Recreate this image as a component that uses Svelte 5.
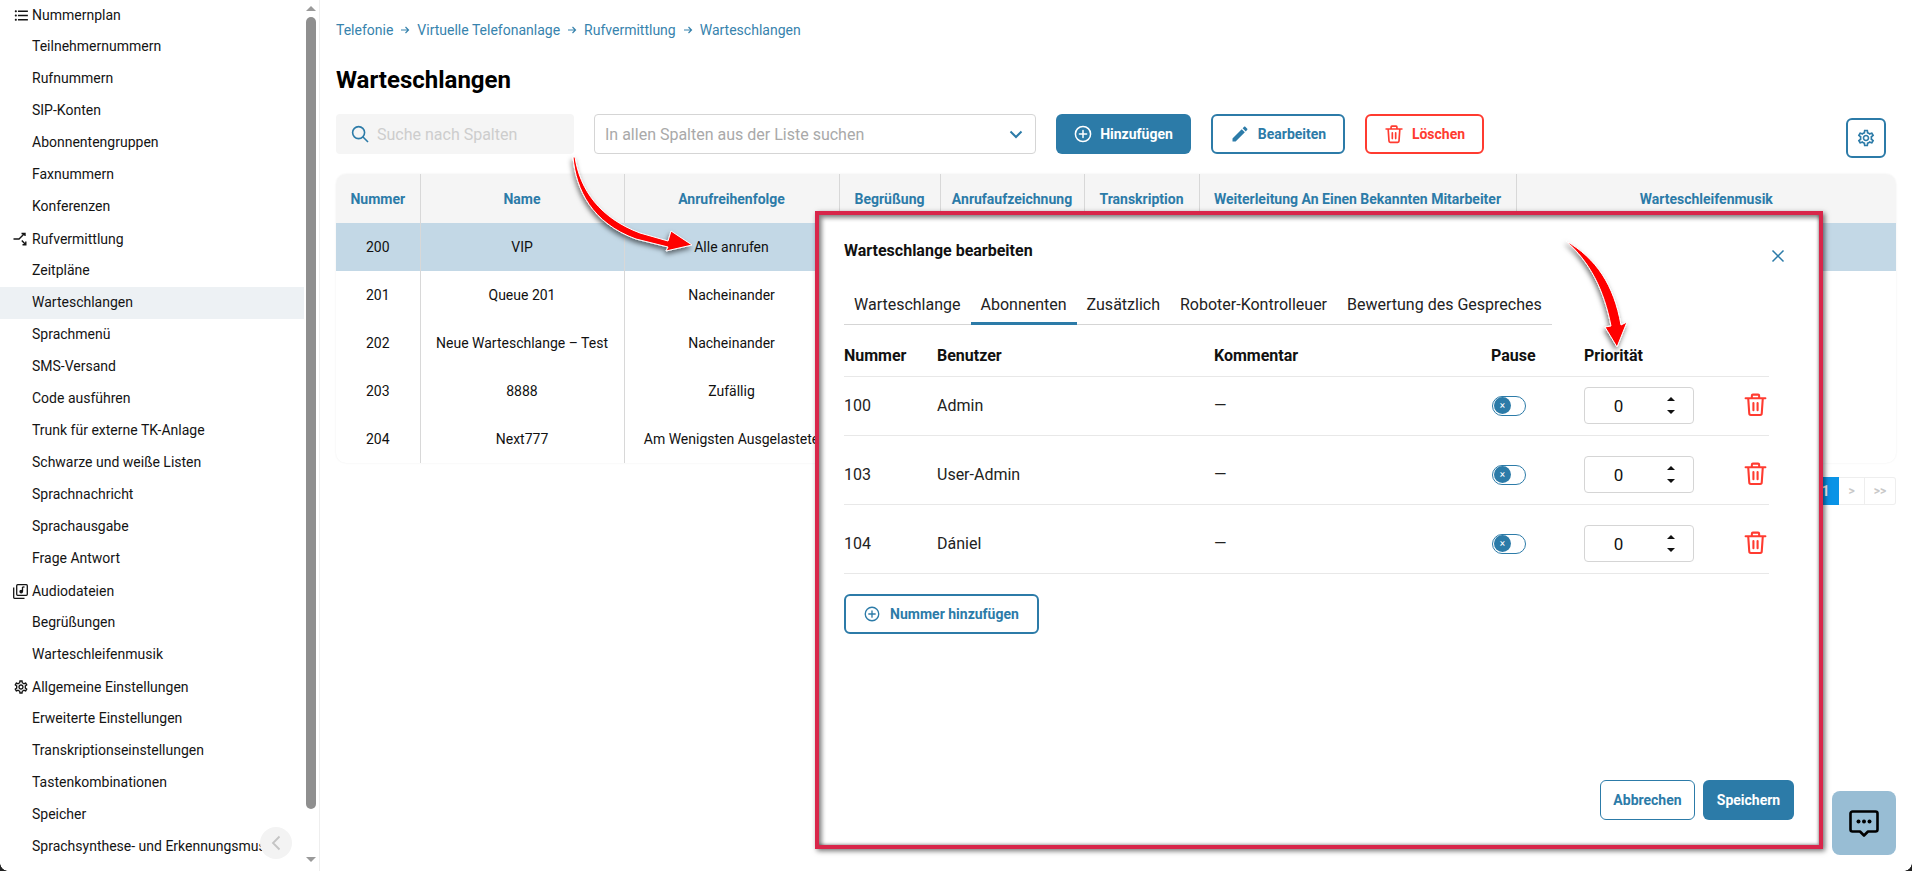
<script>
	const gearPath =
		'M19.43 12.98c.04-.32.07-.64.07-.98 0-.34-.03-.66-.07-.98l2.11-1.65c.19-.15.24-.42.12-.64l-2-3.46c-.09-.16-.26-.25-.44-.25-.06 0-.12.01-.17.03l-2.49 1c-.52-.4-1.08-.73-1.69-.98l-.38-2.65C14.46 2.18 14.25 2 14 2h-4c-.25 0-.46.18-.49.42l-.38 2.65c-.61.25-1.17.59-1.69.98l-2.49-1c-.06-.02-.12-.03-.18-.03-.17 0-.34.09-.43.25l-2 3.46c-.13.22-.07.49.12.64l2.11 1.65c-.04.32-.07.65-.07.98 0 .33.03.66.07.98l-2.11 1.65c-.19.15-.24.42-.12.64l2 3.46c.09.16.26.25.44.25.06 0 .12-.01.17-.03l2.49-1c.52.4 1.08.73 1.69.98l.38 2.65c.03.24.24.42.49.42h4c.25 0 .46-.18.49-.42l.38-2.65c.61-.25 1.17-.59 1.69-.98l2.49 1c.06.02.12.03.18.03.17 0 .34-.09.43-.25l2-3.46c.12-.22.07-.49-.12-.64l-2.11-1.65zm-1.98-1.71c.04.31.05.52.05.73 0 .21-.02.43-.05.73l-.14 1.13.89.7 1.08.84-.7 1.21-1.27-.51-1.04-.42-.9.68c-.43.32-.84.56-1.25.73l-1.06.43-.16 1.13-.2 1.35h-1.4l-.19-1.35-.16-1.13-1.06-.43c-.43-.18-.83-.41-1.23-.71l-.91-.7-1.06.43-1.27.51-.7-1.21 1.08-.84.89-.7-.14-1.13c-.03-.31-.05-.54-.05-.74s.02-.43.05-.73l.14-1.13-.89-.7-1.08-.84.7-1.21 1.27.51 1.04.42.9-.68c.43-.32.84-.56 1.25-.73l1.06-.43.16-1.13.2-1.35h1.39l.19 1.35.16 1.13 1.06.43c.43.18.83.41 1.23.71l.91.7 1.06-.43 1.27-.51.7 1.21-1.07.85-.89.7.14 1.13zM12 8c-2.21 0-4 1.79-4 4s1.79 4 4 4 4-1.79 4-4-1.79-4-4-4zm0 6c-1.1 0-2-.9-2-2s.9-2 2-2 2 .9 2 2-.9 2-2 2z';

	const menu = [
		{ icon: 'list', label: 'Nummernplan', items: ['Teilnehmernummern', 'Rufnummern', 'SIP-Konten', 'Abonnentengruppen', 'Faxnummern', 'Konferenzen'] },
		{ icon: 'split', label: 'Rufvermittlung', items: ['Zeitpläne', 'Warteschlangen', 'Sprachmenü', 'SMS-Versand', 'Code ausführen', 'Trunk für externe TK-Anlage', 'Schwarze und weiße Listen', 'Sprachnachricht', 'Sprachausgabe', 'Frage Antwort'] },
		{ icon: 'music', label: 'Audiodateien', items: ['Begrüßungen', 'Warteschleifenmusik'] },
		{ icon: 'gear', label: 'Allgemeine Einstellungen', items: ['Erweiterte Einstellungen', 'Transkriptionseinstellungen', 'Tastenkombinationen', 'Speicher', 'Sprachsynthese- und Erkennungsmusik'] }
	];

	const crumbs = ['Telefonie', 'Virtuelle Telefonanlage', 'Rufvermittlung', 'Warteschlangen'];

	const columns = [
		{ label: 'Nummer', width: 84 },
		{ label: 'Name', width: 204 },
		{ label: 'Anrufreihenfolge', width: 215 },
		{ label: 'Begrüßung', width: 101 },
		{ label: 'Anrufaufzeichnung', width: 144 },
		{ label: 'Transkription', width: 115 },
		{ label: 'Weiterleitung An Einen Bekannten Mitarbeiter', width: 317 },
		{ label: 'Warteschleifenmusik', width: 380 }
	];

	const queues = [
		{ num: '200', name: 'VIP', order: 'Alle anrufen' },
		{ num: '201', name: 'Queue 201', order: 'Nacheinander' },
		{ num: '202', name: 'Neue Warteschlange – Test', order: 'Nacheinander' },
		{ num: '203', name: '8888', order: 'Zufällig' },
		{ num: '204', name: 'Next777', order: 'Am Wenigsten Ausgelastete' }
	];

	const tabs = ['Warteschlange', 'Abonnenten', 'Zusätzlich', 'Roboter-Kontrolleuer', 'Bewertung des Gespreches'];

	const members = [
		{ num: '100', user: 'Admin' },
		{ num: '103', user: 'User-Admin' },
		{ num: '104', user: 'Dániel' }
	];
</script>

{#snippet trash(size)}
	<svg width={size} height={size} viewBox="0 0 24 24" fill="none" stroke="currentColor" stroke-width="2" stroke-linecap="round" stroke-linejoin="round">
		<path d="M2.5 6h19M8.5 6V3.5a1 1 0 0 1 1-1h5a1 1 0 0 1 1 1V6M5 6l1 14.5a1.5 1.5 0 0 0 1.5 1.5h9a1.5 1.5 0 0 0 1.5-1.5L19 6M10 10.5v7M14 10.5v7" />
	</svg>
{/snippet}

{#snippet plus(size)}
	<svg width={size} height={size} viewBox="0 0 18 18" fill="none" stroke="currentColor" stroke-width="1.5" stroke-linecap="round">
		<circle cx="9" cy="9" r="7.6" />
		<path d="M9 5.4v7.2M5.4 9h7.2" />
	</svg>
{/snippet}

<div class="page">
	<aside class="sidebar">
		<nav class="menu">
			{#each menu as group}
				<div class="group-head">
					<span class="group-icon">
						{#if group.icon === 'list'}
							<svg width="17" height="17" viewBox="0 0 24 24" fill="currentColor"><path d="M4 10.5c-.83 0-1.5.67-1.5 1.5s.67 1.5 1.5 1.5 1.5-.67 1.5-1.5-.67-1.5-1.5-1.5zm0-6c-.83 0-1.5.67-1.5 1.5S3.17 7.5 4 7.5 5.5 6.83 5.5 6 4.83 4.5 4 4.5zm0 12c-.83 0-1.5.68-1.5 1.5s.68 1.5 1.5 1.5 1.5-.68 1.5-1.5-.67-1.5-1.5-1.5zM7 19h14v-2H7v2zm0-6h14v-2H7v2zm0-8v2h14V5H7z" /></svg>
						{:else if group.icon === 'split'}
							<svg width="16" height="16" viewBox="0 0 16 16" fill="none" stroke="currentColor" stroke-width="1.4"><path d="M0.5 8H6L11.5 2.5M8.5 2.5h3.5V5M8.8 9.5L12.5 13.5M9.5 13.8h3.3v-3.3" /></svg>
						{:else if group.icon === 'music'}
							<svg width="15" height="15" viewBox="0 0 15 15" fill="none" stroke="currentColor" stroke-width="1.3"><rect x="3.7" y="0.7" width="10.6" height="10.6" rx="1" /><path d="M0.7 3.5v10a.8.8 0 0 0 .8.8h10" /><path d="M9.5 3v4.5" /><circle cx="8.2" cy="7.6" r="1.2" fill="currentColor" /><path d="M9.5 3h2" /></svg>
						{:else}
							<svg width="16" height="16" viewBox="0 0 24 24" fill="currentColor"><path d={gearPath} /></svg>
						{/if}
					</span>
					{group.label}
				</div>
				{#each group.items as item}
					<div class="item" class:active={item === 'Warteschlangen'}>{item}</div>
				{/each}
			{/each}
		</nav>
		<div class="scrollbar">
			<span class="sb-up"></span>
			<span class="sb-thumb"></span>
			<span class="sb-down"></span>
		</div>
		<button class="collapse" aria-label="Einklappen">
			<svg width="12" height="16" viewBox="0 0 12 16" fill="none" stroke="#c4c4c4" stroke-width="1.8"><path d="M9.5 1.5L3 8l6.5 6.5" /></svg>
		</button>
	</aside>

	<main class="main">
		<div class="crumbs">
			{#each crumbs as crumb, i}
				{#if i > 0}
					<span class="crumb-sep">
						<svg width="10" height="10" viewBox="0 0 10 10" fill="none" stroke="currentColor" stroke-width="1.2"><path d="M1 5h7.5M5.5 2l3 3-3 3" /></svg>
					</span>
				{/if}
				<span>{crumb}</span>
			{/each}
		</div>

		<h1 class="title">Warteschlangen</h1>

		<div class="toolbar">
			<div class="search">
				<svg width="18" height="18" viewBox="0 0 18 18" fill="none" stroke="#2c7ba8" stroke-width="1.6"><circle cx="7.6" cy="7.6" r="6" /><path d="M12 12l5 5" /></svg>
				<span>Suche nach Spalten</span>
			</div>
			<div class="select">
				<span>In allen Spalten aus der Liste suchen</span>
				<svg width="14" height="9" viewBox="0 0 14 9" fill="none" stroke="#2c7ba8" stroke-width="2"><path d="M1.5 1.5L7 7l5.5-5.5" /></svg>
			</div>
			<button class="btn btn-fill btn-add">{@render plus(18)} Hinzufügen</button>
			<button class="btn btn-line btn-edit">
				<svg width="20" height="20" viewBox="0 0 24 24" fill="currentColor"><path d="M3 17.25V21h3.75L17.81 9.94l-3.75-3.75L3 17.25zM20.71 7.04c.39-.39.39-1.02 0-1.41l-2.34-2.34c-.39-.39-1.02-.39-1.41 0l-1.83 1.83 3.75 3.75 1.83-1.83z" /></svg>
				Bearbeiten
			</button>
			<button class="btn btn-line btn-del">{@render trash(20)} Löschen</button>
			<button class="gear-btn" aria-label="Einstellungen">
				<svg width="20" height="20" viewBox="0 0 24 24" fill="currentColor"><path d={gearPath} /></svg>
			</button>
		</div>

		<div class="table-wrap">
			<table class="queues">
				<colgroup>
					{#each columns as col}
						<col style="width: {col.width}px" />
					{/each}
				</colgroup>
				<thead>
					<tr>
						{#each columns as col}
							<th>{col.label}</th>
						{/each}
					</tr>
				</thead>
				<tbody>
					{#each queues as q, i}
						<tr class:selected={i === 0}>
							<td>{q.num}</td>
							<td>{q.name}</td>
							<td>{q.order}</td>
							<td></td>
							<td></td>
							<td></td>
							<td></td>
							<td></td>
						</tr>
					{/each}
				</tbody>
			</table>
		</div>

		<div class="pager">
			<span>&lt;&lt;</span>
			<span>&lt;</span>
			<span class="current">1</span>
			<span>&gt;</span>
			<span>&gt;&gt;</span>
		</div>
	</main>

	<!-- annotation arrows drawn over the screenshot -->
	<svg class="arrows" width="1912" height="871" viewBox="0 0 1912 871">
		<defs>
			<filter id="arrow-shadow" x="-20%" y="-20%" width="150%" height="150%">
				<feDropShadow dx="-1" dy="3" stdDeviation="2.5" flood-color="#000" flood-opacity="0.55" />
			</filter>
		</defs>
		<g fill="#f00" stroke="#fff" stroke-width="1" filter="url(#arrow-shadow)">
			<path d="M575 157C580 190 600 218 640 233L668 241L671 231L692 245L666 251L668 247L636 239C592 223 576 190 573 157Z" />
			<path d="M1566 241C1596 258 1614 285 1621 325L1627 322L1617 347L1605 327L1611 326C1604 290 1590 262 1566 241Z" />
		</g>
	</svg>

	<section class="modal">
		<div class="modal-head">
			<h2>Warteschlange bearbeiten</h2>
			<button class="close" aria-label="Schließen">
				<svg width="14" height="14" viewBox="0 0 14 14" fill="none" stroke="#2c7ba8" stroke-width="1.5"><path d="M1.5 1.5l11 11M12.5 1.5l-11 11" /></svg>
			</button>
		</div>

		<div class="tabs">
			{#each tabs as tab, i}
				<span class="tab" class:on={i === 1}>{tab}</span>
			{/each}
		</div>

		<div class="members">
			<div class="m-row m-head">
				<span>Nummer</span>
				<span>Benutzer</span>
				<span>Kommentar</span>
				<span>Pause</span>
				<span>Priorität</span>
				<span></span>
			</div>
			{#each members as m}
				<div class="m-row">
					<span>{m.num}</span>
					<span>{m.user}</span>
					<span>—</span>
					<span class="toggle"><span class="knob">×</span></span>
					<div class="spin">
						<span class="spin-value">0</span>
						<span class="carets"><i class="up"></i><i class="down"></i></span>
					</div>
					<span class="del">{@render trash(25)}</span>
				</div>
			{/each}
		</div>

		<button class="btn btn-line btn-number">{@render plus(16)} Nummer hinzufügen</button>

		<div class="modal-foot">
			<button class="btn-foot cancel">Abbrechen</button>
			<button class="btn-foot save">Speichern</button>
		</div>
	</section>

	<button class="chat" aria-label="Chat">
		<svg width="30" height="27" viewBox="0 0 30 27" fill="none"><path d="M3.5 1.5h23a2 2 0 0 1 2 2v16a2 2 0 0 1-2 2h-7.5L15 25.5 11 21.5H3.5a2 2 0 0 1-2-2v-16a2 2 0 0 1 2-2z" stroke="#000" stroke-width="2.6" stroke-linejoin="round" /><circle cx="9.5" cy="11.5" r="2" fill="#000" /><circle cx="15" cy="11.5" r="2" fill="#000" /><circle cx="20.5" cy="11.5" r="2" fill="#000" /></svg>
	</button>

	<span class="corner corner-l"></span>
	<span class="corner corner-r"></span>
</div>

<style>
	:global(body) {
		margin: 0;
		background: #fff;
		overflow: hidden;
	}

	.page {
		position: relative;
		display: flex;
		width: 1912px;
		height: 871px;
		overflow: hidden;
		font-family: Roboto, "Liberation Sans", sans-serif;
		font-size: 14px;
		color: #111;
	}

	button {
		font-family: inherit;
		cursor: pointer;
	}

	/* sidebar */
	.sidebar {
		position: relative;
		flex: none;
		display: flex;
		width: 320px;
		height: 871px;
		box-sizing: border-box;
		border-right: 1px solid #eee;
	}

	.menu {
		width: 304px;
		margin-top: -1px;
		overflow: hidden;
		white-space: nowrap;
		color: #141414;
	}

	.group-head {
		display: flex;
		align-items: center;
		height: 32px;
		box-sizing: border-box;
		padding-left: 13px;
	}

	.group-icon {
		display: flex;
		justify-content: flex-start;
		width: 19px;
	}

	.item {
		height: 32px;
		line-height: 30px;
		padding-left: 32px;
	}

	.item.active {
		background: #edf1f4;
	}

	.scrollbar {
		display: flex;
		flex-direction: column;
		align-items: center;
		width: 10px;
		margin-left: 2px;
		padding-top: 6px;
		box-sizing: border-box;
		height: 871px;
	}

	.sb-up,
	.sb-down {
		width: 0;
		height: 0;
		border-left: 5px solid transparent;
		border-right: 5px solid transparent;
	}

	.sb-up {
		border-bottom: 5px solid #9a9a9a;
	}

	.sb-down {
		margin-top: 48px;
		border-top: 5px solid #9a9a9a;
	}

	.sb-thumb {
		width: 10px;
		height: 792px;
		margin-top: 6px;
		border-radius: 5px;
		background: #8f8f8f;
	}

	.collapse {
		position: absolute;
		left: 260px;
		top: 827px;
		display: flex;
		align-items: center;
		justify-content: center;
		width: 32px;
		height: 32px;
		padding: 0;
		border: none;
		border-radius: 50%;
		background: #f3f3f3;
	}

	/* main */
	.main {
		flex: 1;
		min-width: 0;
		padding: 21px 16px 0;
	}

	.crumbs {
		display: flex;
		align-items: center;
		height: 18px;
		color: #3783ad;
		font-size: 14px;
	}

	.crumb-sep {
		display: flex;
		justify-content: center;
		width: 24px;
	}

	.title {
		margin: 26px 0 0;
		height: 30px;
		font-size: 24px;
		line-height: 30px;
		font-weight: 700;
		color: #000;
	}

	.toolbar {
		display: flex;
		align-items: flex-start;
		gap: 20px;
		margin-top: 19px;
	}

	.search {
		display: flex;
		align-items: center;
		gap: 8px;
		width: 238px;
		height: 40px;
		box-sizing: border-box;
		padding-left: 15px;
		border-radius: 4px;
		background: #f5f5f5;
		color: #cdcdcd;
		font-size: 16px;
	}

	.select {
		display: flex;
		align-items: center;
		justify-content: space-between;
		width: 442px;
		height: 40px;
		box-sizing: border-box;
		padding: 0 12px 0 10px;
		border: 1px solid #d5d5d5;
		border-radius: 4px;
		color: #a9a9a9;
		font-size: 16px;
	}

	.btn {
		display: flex;
		align-items: center;
		justify-content: center;
		gap: 8px;
		height: 40px;
		box-sizing: border-box;
		border-radius: 6px;
		font-size: 14px;
		font-weight: 700;
		padding: 0;
	}

	.btn-fill {
		border: none;
		background: #2c7ba8;
		color: #fff;
	}

	.btn-line {
		border: 2px solid #2c7ba8;
		background: #fff;
		color: #2c7ba8;
	}

	.btn-add {
		width: 135px;
	}

	.btn-edit {
		width: 134px;
	}

	.btn-del {
		width: 119px;
		border-color: #ff3b30;
		color: #ff3b30;
	}

	.gear-btn {
		display: flex;
		align-items: center;
		justify-content: center;
		width: 40px;
		height: 40px;
		margin: 4px 10px 0 auto;
		padding: 0;
		border: 2px solid #2c7ba8;
		border-radius: 6px;
		background: #fff;
		color: #2c7ba8;
	}

	.table-wrap {
		margin-top: 16px;
		border-radius: 10px;
		overflow: hidden;
		box-shadow: 0 0 2px rgba(0, 0, 0, 0.08);
	}

	.queues {
		width: 1560px;
		table-layout: fixed;
		border-collapse: collapse;
	}

	.queues th {
		height: 49px;
		padding: 0;
		background: #f5f5f5;
		border-left: 1px solid #d8d8d8;
		color: #2c7ba8;
		font-size: 14px;
		font-weight: 700;
		white-space: nowrap;
	}

	.queues td {
		height: 48px;
		padding: 0;
		border-left: 1px solid #d8d8d8;
		text-align: center;
		white-space: nowrap;
		color: #111;
	}

	.queues th:first-child,
	.queues td:first-child {
		border-left: none;
	}

	.queues .selected td {
		background: #c3d8e6;
	}

	.pager {
		display: flex;
		justify-content: flex-end;
		margin-top: 14px;
		height: 28px;
	}

	.pager span {
		display: flex;
		align-items: center;
		justify-content: center;
		min-width: 26px;
		padding: 0 2px;
		box-sizing: border-box;
		border: 1px solid #eee;
		border-left: none;
		color: #c8c8c8;
		font-size: 12px;
		font-weight: 700;
	}

	.pager span:last-child {
		width: 31px;
		border-radius: 0 3px 3px 0;
	}

	.pager .current {
		background: #0a93e6;
		color: #fff;
		font-size: 14px;
		border-color: #0a93e6;
	}

	/* annotation */
	.arrows {
		position: absolute;
		left: 0;
		top: 0;
		z-index: 3;
		pointer-events: none;
	}

	/* modal */
	.modal {
		position: absolute;
		left: 815px;
		top: 211px;
		z-index: 2;
		display: flex;
		flex-direction: column;
		width: 1008px;
		height: 638px;
		box-sizing: border-box;
		padding: 25px;
		background: #fff;
		border: 4px solid #d8264a;
		box-shadow: 2px 2px 5px rgba(0, 0, 0, 0.55), inset 3px 3px 4px rgba(0, 0, 0, 0.45), inset -1px -1px 3px rgba(0, 0, 0, 0.35);
	}

	.modal-head {
		display: flex;
		align-items: center;
		justify-content: space-between;
		height: 20px;
	}

	.modal-head h2 {
		margin: 0;
		font-size: 16px;
		font-weight: 700;
		color: #111;
	}

	.close {
		display: flex;
		padding: 0;
		margin: 12px 9px 0 0;
		border: none;
		background: none;
	}

	.tabs {
		display: flex;
		width: 708px;
		margin-top: 25px;
		border-bottom: 1px solid #d5d5d5;
	}

	.tab {
		height: 39px;
		box-sizing: border-box;
		padding: 10px 10px 0;
		margin-bottom: -1px;
		font-size: 16px;
		line-height: 20px;
		color: #222;
	}

	.tab.on {
		border-bottom: 3px solid #2c7ba8;
		height: 40px;
	}

	.members {
		width: 925px;
		font-size: 16px;
	}

	.m-row {
		display: grid;
		grid-template-columns: 93px 277px 277px 93px 159px 1fr;
		align-items: center;
		padding: 20px 0 11px;
		border-bottom: 1px solid #e8e8e8;
		color: #222;
	}

	.m-head {
		height: 52px;
		box-sizing: border-box;
		padding: 10px 0 0;
		font-weight: 700;
		color: #111;
	}

	.m-head + .m-row {
		padding-top: 10px;
	}

	.toggle {
		display: flex;
		align-items: center;
		width: 34px;
		height: 20px;
		margin-left: 1px;
		box-sizing: border-box;
		border: 1px solid #2c7ba8;
		border-radius: 10px;
	}

	.knob {
		display: flex;
		align-items: center;
		justify-content: center;
		width: 17px;
		height: 17px;
		margin-left: 1px;
		border-radius: 50%;
		background: #2c7ba8;
		color: #fff;
		font-size: 10px;
		line-height: 1;
	}

	.spin {
		display: flex;
		align-items: center;
		width: 110px;
		height: 37px;
		box-sizing: border-box;
		border: 1px solid #d5d5d5;
		border-radius: 4px;
		color: #111;
	}

	.spin-value {
		width: 67px;
		text-align: center;
		font-size: 17px;
	}

	.carets {
		display: flex;
		flex-direction: column;
		align-items: center;
		gap: 9px;
		width: 38px;
	}

	.carets i {
		width: 0;
		height: 0;
		border-left: 4px solid transparent;
		border-right: 4px solid transparent;
	}

	.carets .up {
		border-bottom: 4px solid #111;
	}

	.carets .down {
		border-top: 4px solid #111;
	}

	.del {
		display: flex;
		justify-content: flex-end;
		padding: 0 5px 2px 0;
		color: #ff3b30;
	}

	.btn-number {
		width: 195px;
		height: 40px;
		margin-top: 20px;
		gap: 10px;
	}

	.modal-foot {
		display: flex;
		justify-content: flex-end;
		gap: 8px;
		margin-top: auto;
	}

	.btn-foot {
		height: 40px;
		padding: 0;
		border-radius: 6px;
		font-size: 14px;
		font-weight: 700;
	}

	.cancel {
		width: 95px;
		border: 1px solid #2c7ba8;
		background: #fff;
		color: #2c7ba8;
	}

	.save {
		width: 91px;
		border: none;
		background: #2c7ba8;
		color: #fff;
	}

	.chat {
		position: absolute;
		left: 1832px;
		top: 791px;
		z-index: 4;
		display: flex;
		align-items: center;
		justify-content: center;
		width: 64px;
		height: 64px;
		padding: 0;
		border: none;
		border-radius: 8px;
		background: #98bdd4;
	}

	.corner {
		position: absolute;
		bottom: 0;
		z-index: 5;
		width: 8px;
		height: 8px;
	}

	.corner-l {
		left: 0;
		background: radial-gradient(circle at 100% 0, transparent 7.5px, #222 8px);
	}

	.corner-r {
		right: 0;
		background: radial-gradient(circle at 0 0, transparent 7.5px, #222 8px);
	}
</style>
